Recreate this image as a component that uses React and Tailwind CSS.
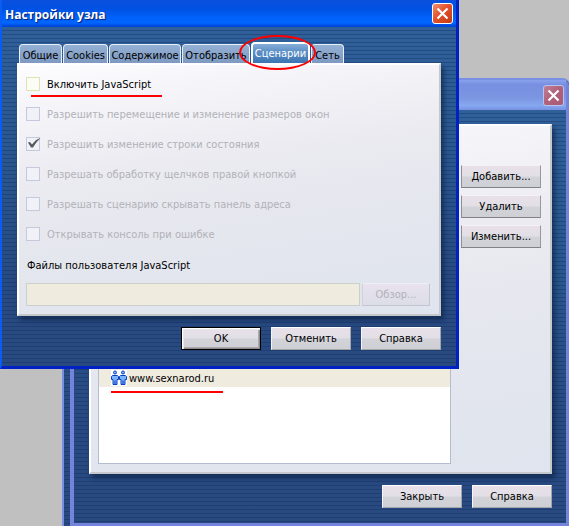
const stripes =
  "bg-[repeating-linear-gradient(180deg,transparent_0px,transparent_3px,rgba(12,36,80,0.32)_3px,rgba(12,36,80,0.32)_4px),linear-gradient(180deg,#30609a_0%,#2a5890_35%,#284a82_75%,#284a80_100%)]";

const panelLook =
  "border-2 border-t-white border-l-white border-r-[#c4c8cb] border-b-[#c4c8cb] bg-[linear-gradient(172deg,#fdfcfe_0%,#f3f3f8_18%,#ebebf1_38%,#e5e7ee_62%,#dfe4ee_100%)] shadow-[3px_4px_5px_rgba(8,26,60,0.6)]";

const buttonLook =
  "flex h-[23px] w-[80px] shrink-0 items-center justify-center border pt-px text-[11px] leading-4 bg-[linear-gradient(180deg,#e9e0e9_0%,#e2dfe6_45%,#d2d3d9_55%,#cfd0d5_100%)]";

const tabs = [
  { label: "Общие", width: "w-[43px]" },
  { label: "Cookies", width: "w-[45px]" },
  { label: "Содержимое", width: "w-[72px]" },
  { label: "Отобразить", width: "w-[68px]" },
  { label: "Сценарии", width: "w-[59px]", selected: true },
  { label: "Сеть", width: "w-[33px]" },
];

const options = [
  { id: "enable", label: "Включить JavaScript", enabled: true },
  { id: "resize", label: "Разрешить перемещение и изменение размеров окон" },
  { id: "status", label: "Разрешить изменение строки состояния", checked: true },
  { id: "rclick", label: "Разрешать обработку щелчков правой кнопкой" },
  { id: "address", label: "Разрешать сценарию скрывать панель адреса" },
  { id: "console", label: "Открывать консоль при ошибке" },
];

function Button({ children, primary, raised }) {
  const edge = primary
    ? "border-black shadow-[inset_1px_1px_0_#ffffff,inset_2px_2px_0_#e8e8ec,inset_-1px_-1px_0_#8e8e92,inset_-2px_-2px_0_#aaaaae]"
    : raised
      ? "border-t-[#f4f2f6] border-l-[#8f9094] border-r-[#97989c] border-b-[#808186]"
      : "border-t-white border-l-[#f6f4f8] border-r-[#a4a5a9] border-b-[#a4a5a9]";
  return (
    <button type="button" className={`${buttonLook} ${edge}`}>
      {children}
    </button>
  );
}

function CloseButton({ faded }) {
  return (
    <button
      type="button"
      aria-label="Закрыть окно"
      className={
        faded
          ? "flex size-[21px] items-center justify-center rounded-[3px] border border-[#b9c3ee] bg-[linear-gradient(135deg,#c08098_0%,#b0607a_50%,#a85c78_100%)]"
          : "flex size-[21px] items-center justify-center rounded-[3px] border border-white bg-[linear-gradient(135deg,#f09070_0%,#e2512c_45%,#c43a10_100%)]"
      }
    >
      <svg width="13" height="13" viewBox="0 0 13 13" fill="none" stroke="#fff" strokeWidth="2.2" aria-hidden="true">
        <path d="M1.5 1.5 11.5 11.5M11.5 1.5 1.5 11.5" />
      </svg>
    </button>
  );
}

function PeopleIcon() {
  const person = (
    <>
      <circle cx="4" cy="2.5" r="1.5" />
      <path d="M1.500 5.500h5l1 1v3h-1.500v5h-4v-5H.5v-3z" />
      <path d="M4 10.500v4" />
    </>
  );
  return (
    <svg width="16" height="16" viewBox="0 0 16 16" fill="#7ab2fc" stroke="#0a3fc0" aria-hidden="true" className="shrink-0 bg-white">
      <g>{person}</g>
      <g transform="translate(8 0)">{person}</g>
    </svg>
  );
}

function OptionRow({ id, label, enabled, checked }) {
  return (
    <div className="flex h-[30px] items-center gap-[7px]">
      <span className="grid size-[14px]">
        <input
          id={id}
          type="checkbox"
          defaultChecked={checked}
          disabled={!enabled}
          className={`col-start-1 row-start-1 size-[14px] appearance-none border ${
            enabled ? "border-[#dfe3b4] bg-[#fbfcf4]" : "border-[#c6c9dc] bg-[#f0f2f8]"
          }`}
        />
        {checked && (
          <svg viewBox="0 0 14 14" className="pointer-events-none col-start-1 row-start-1 size-[14px] overflow-visible" fill="#58585c" aria-hidden="true">
            <path d="M2 5.5 4 5l2 2.5C8.500 4 11 2 14.500 1 11.500 4 9 7 7 10.500H5z" />
          </svg>
        )}
      </span>
      <label htmlFor={id} className={enabled ? "pt-0.5 text-black" : "pt-0.5 text-[#b2b2b8]"}>
        {label}
      </label>
    </div>
  );
}

function SitesWindow() {
  return (
    <div className={`absolute top-[78px] right-0 bottom-0 left-[62px] flex rounded-tr-[6px] border-t-2 border-l-2 border-[#7890e4] pl-[6px] ${stripes}`}>
      <section className="flex min-w-0 flex-1 flex-col rounded-tr-[6px] border-r-[3px] border-b-[3px] border-l-4 border-[#7484dc]">
        <header className="flex h-[30px] shrink-0 items-center justify-end bg-[linear-gradient(180deg,#8ba2ee_0%,#7890e0_15%,#7c96e2_60%,#86a8f0_85%,#7890e0_100%)] pr-[2px]">
          <CloseButton faded />
        </header>
        <div className={`flex flex-1 flex-col gap-[11px] pt-[14px] pr-[14px] pb-[15px] pl-[15px] ${stripes}`}>
          <div className={`flex flex-1 gap-[10px] pt-[39px] pr-[9px] pb-2 pl-[7px] ${panelLook}`}>
            <ul className="flex-1 border border-[#b4bccf] bg-white pt-[203px]">
              <li className="flex h-[18px] items-center gap-[2px] bg-[#efebde] pl-3">
                <PeopleIcon />
                <a href="#site" className="pt-0.5 text-black">www.sexnarod.ru</a>
              </li>
            </ul>
            <div className="flex flex-col gap-[7px]">
              <Button raised>Добавить...</Button>
              <Button raised>Удалить</Button>
              <Button raised>Изменить...</Button>
            </div>
          </div>
          <div className="flex justify-end gap-[10px]">
            <Button>Закрыть</Button>
            <Button>Справка</Button>
          </div>
        </div>
      </section>
    </div>
  );
}

function NodeSettingsWindow() {
  return (
    <section className="absolute top-0 left-0 w-[459px] border-r-[3px] border-b-[3px] border-l-2 border-r-[#0022c4] border-b-[#0022c4] border-l-[#0a5cf4]">
      <header className="flex h-[27px] items-center justify-between bg-[linear-gradient(180deg,#0a50dc_0%,#0052e4_35%,#0062fa_65%,#0066ff_85%,#0040d0_100%)] pr-[3px] pl-[3px]">
        <h1 className="pt-0.5 font-['Open_Sans',sans-serif] text-[12px] leading-5 font-bold text-white [text-shadow:1px_1px_1px_#0a1f70]">
          Настройки узла
        </h1>
        <CloseButton />
      </header>
      <div className={`px-[15px] pt-[15px] pb-4 ${stripes}`}>
        <div role="tablist" className="flex items-end gap-px pl-[2px]">
          {tabs.map((tab) => (
            <button
              key={tab.label}
              type="button"
              role="tab"
              aria-selected={Boolean(tab.selected)}
              className={`flex items-center justify-center rounded-t-[4px] whitespace-nowrap ${tab.width} ${
                tab.selected
                  ? "h-[21px] border-2 border-b-0 border-white bg-[linear-gradient(180deg,#86aed8_0%,#5d90c6_40%,#3a74b2_100%)] text-white"
                  : "h-[19px] border border-b-0 border-[#e8eef8] bg-[linear-gradient(180deg,#94b0d4_0%,#86a2c8_60%,#7e9ac2_100%)] pt-[3px] text-black"
              }`}
            >
              {tab.label}
            </button>
          ))}
        </div>
        <div className={`px-[7px] pt-1 pb-2 ${panelLook}`}>
          {options.map((option) => (
            <OptionRow key={option.id} {...option} />
          ))}
          <label htmlFor="user-files" className="flex h-[34px] items-center pl-px text-black">
            Файлы пользователя JavaScript
          </label>
          <div className="flex gap-[2px] pr-[2px]">
            <input
              id="user-files"
              type="text"
              disabled
              className="h-[23px] min-w-0 flex-1 border border-[#cdcfca] bg-[#efebde]"
            />
            <button
              type="button"
              disabled
              className="h-[23px] w-[68px] border border-t-[#eeeef4] border-r-[#c2c4ce] border-b-[#c2c4ce] border-l-[#cfd1dc] bg-[linear-gradient(180deg,#e8e2ee_0%,#dcdde8_100%)] pt-px text-[#b2b2b8]"
            >
              Обзор...
            </button>
          </div>
        </div>
        <div className="flex justify-end gap-[10px] pt-[11px]">
          <Button primary>OK</Button>
          <Button>Отменить</Button>
          <Button>Справка</Button>
        </div>
      </div>
    </section>
  );
}

export default function App() {
  return (
    <main className="relative min-h-screen overflow-hidden bg-[#c0c0c0] font-['DejaVu_Sans_Condensed','DejaVu_Sans',sans-serif] text-[11px] leading-4 text-black">
      <SitesWindow />
      <NodeSettingsWindow />
      <div className="absolute top-[95px] left-[31px] h-[2px] w-[131px] bg-[#ff0000]" />
      <div className="absolute top-[391px] left-[111px] h-[2px] w-[112px] bg-[#ff0000]" />
      <div className="absolute top-[35px] left-[239px] h-[35px] w-[77px] rounded-[50%] border-2 border-[#ff0000]" />
    </main>
  );
}
